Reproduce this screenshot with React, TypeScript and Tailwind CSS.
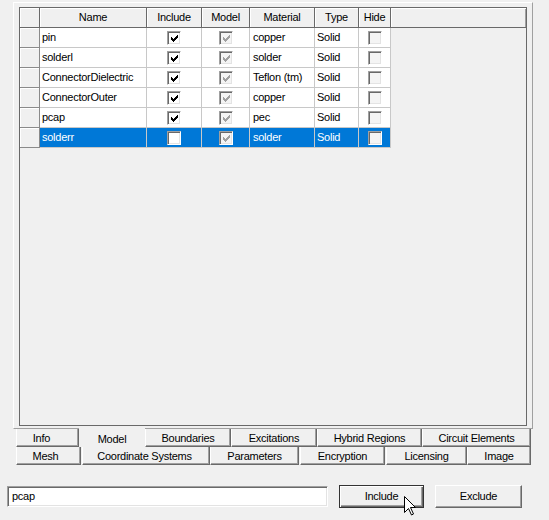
import React from 'react';

type Row = { name: string; include: boolean; material: string; selected?: boolean };

const rows: Row[] = [
  { name: 'pin', include: true, material: 'copper' },
  { name: 'solderl', include: true, material: 'solder' },
  { name: 'ConnectorDielectric', include: true, material: 'Teflon (tm)' },
  { name: 'ConnectorOuter', include: true, material: 'copper' },
  { name: 'pcap', include: true, material: 'pec' },
  { name: 'solderr', include: false, material: 'solder', selected: true },
];

function Check({ checked, disabled }: { checked: boolean; disabled?: boolean }) {
  return (
    <div
      className={`w-[14px] h-[14px] flex items-center justify-center border border-t-[#a0a0a0] border-l-[#a0a0a0] border-r-white border-b-white shadow-[inset_1px_1px_0_#696969,inset_-1px_-1px_0_#e3e3e3] ${
        disabled ? 'bg-[#f4f4f4]' : 'bg-white'
      }`}
    >
      {checked && (
        <svg width="7" height="7" viewBox="0 0 7 7" className="ml-[1px] mt-[1px]">
          <path
            d="M0 2h1v3H0z M1 3h1v3H1z M2 4h1v3H2z M3 3h1v3H3z M4 2h1v3H4z M5 1h1v3H5z M6 0h1v3H6z"
            fill={disabled ? '#a0a0a0' : '#000'}
          />
        </svg>
      )}
    </div>
  );
}

function Tab({ label, w, ml, pad, selected }: { label: string; w: string; ml?: string; pad?: string; selected?: boolean }) {
  if (selected) {
    return (
      <div className={`${w} ${ml ?? ''} -mt-px h-[19px] bg-[#f0f0f0] flex items-center justify-center pt-[4px]`}>
        {label}
      </div>
    );
  }
  return (
    <div
      className={`${w} ${ml ?? ''} ${pad ?? ''} h-[18px] pt-[2px] flex items-center justify-center border-l border-l-white border-r border-r-[#696969] border-b border-b-[#696969] shadow-[inset_-1px_-1px_0_#a0a0a0]`}
    >
      {label}
    </div>
  );
}

const head = 'h-[20px] flex items-center justify-center border-r border-b border-[#696969] shadow-[inset_1px_1px_0_#fff]';

export default function App() {
  return (
    <div
      className="relative w-[549px] h-[520px] bg-[#f0f0f0] text-[11px] tracking-[-0.25px] text-black overflow-hidden"
      style={{ fontFamily: '"Liberation Sans", Arial, sans-serif' }}
    >
      {/* tab page */}
      <div className="ml-[13px] mt-[2px] w-[520px] h-[427px] border-l border-t border-white border-r border-r-[#a0a0a0] border-b border-b-[#a0a0a0] pl-[5px] pt-[4px]">
        <div className="w-[508px] h-[419px] border border-[#696969] bg-[#f0f0f0]">
          <div className="flex">
            <div className={`w-[20px] ${head}`} />
            <div className={`w-[107px] ${head}`}>Name</div>
            <div className={`w-[55px] ${head}`}>Include</div>
            <div className={`w-[48px] ${head}`}>Model</div>
            <div className={`w-[65px] ${head}`}>Material</div>
            <div className={`w-[44px] ${head}`}>Type</div>
            <div className={`w-[32px] ${head}`}>Hide</div>
            <div className="flex-1 h-[20px] border-b border-[#696969] shadow-[inset_1px_1px_0_#fff,inset_-1px_0_0_#a0a0a0]" />
          </div>
          {rows.map((r) => {
            const cell = `h-[20px] flex items-center border-r border-b border-[#c8c8c8] ${
              r.selected ? 'bg-[#0078d7] text-white' : 'bg-white'
            }`;
            return (
              <div key={r.name} className="flex">
                <div className="w-[20px] h-[20px] border-r border-b border-[#8a8a8a] shadow-[inset_1px_1px_0_#fff]" />
                <div className={`w-[107px] px-[2px] ${cell}`}>{r.name}</div>
                <div className={`w-[55px] justify-center ${cell}`}>
                  <Check checked={r.include} />
                </div>
                <div className={`w-[48px] justify-center ${cell}`}>
                  <Check checked disabled />
                </div>
                <div className={`w-[65px] px-[3px] ${cell}`}>{r.material}</div>
                <div className={`w-[44px] px-[2px] ${cell}`}>Solid</div>
                <div className={`w-[32px] justify-center ${cell}`}>
                  <Check checked={false} disabled />
                </div>
              </div>
            );
          })}
        </div>
      </div>

      {/* tabs */}
      <div className="flex ml-[16px]">
        <Tab label="Info" w="w-[63px]" pad="pr-[12px]" />
        <Tab label="Model" w="w-[66px]" selected />
        <Tab label="Boundaries" w="w-[86px]" />
        <Tab label="Excitations" w="w-[86px]" />
        <Tab label="Hybrid Regions" w="w-[105px]" />
        <Tab label="Circuit Elements" w="w-[109px]" />
      </div>
      <div className="flex ml-[16px]">
        <Tab label="Mesh" w="w-[65px]" pad="pr-[6px]" />
        <Tab label="Coordinate Systems" w="w-[128px]" ml="ml-[1px]" pad="pr-[3px]" />
        <Tab label="Parameters" w="w-[89px]" />
        <Tab label="Encryption" w="w-[85px]" ml="ml-[1px]" />
        <Tab label="Licensing" w="w-[81px]" ml="ml-[1px]" />
        <Tab label="Image" w="w-[64px]" />
      </div>

      {/* filter row */}
      <div className="flex items-center mt-[20px] h-[23px]">
        <div className="ml-[7px] w-[321px] h-[21px] bg-white flex items-center pl-[4px] border border-t-[#a0a0a0] border-l-[#a0a0a0] border-r-white border-b-white shadow-[inset_1px_1px_0_#696969,inset_-1px_-1px_0_#e3e3e3]">
          pcap
        </div>
        <button className="ml-[11px] w-[85px] h-[23px] flex items-center justify-center border border-[#333] bg-[#f0f0f0] shadow-[inset_1px_1px_0_#fff,inset_-1px_-1px_0_#696969,inset_-2px_-2px_0_#a0a0a0]">
          Include
        </button>
        <button className="ml-[11px] w-[87px] h-[23px] flex items-center justify-center border border-t-white border-l-white border-r-[#696969] border-b-[#696969] bg-[#f0f0f0] shadow-[inset_-1px_-1px_0_#a0a0a0]">
          Exclude
        </button>
      </div>

      {/* mouse pointer */}
      <svg className="absolute left-[404px] top-[496px]" width="13" height="20" viewBox="0 0 13 20">
        <path
          d="M0.5 0.5V16.5L4.5 12.5L7.5 19L9.5 18L6.5 11.5H11.5Z"
          fill="#fff"
          stroke="#000"
          strokeWidth="1"
          strokeLinejoin="miter"
        />
      </svg>
    </div>
  );
}
